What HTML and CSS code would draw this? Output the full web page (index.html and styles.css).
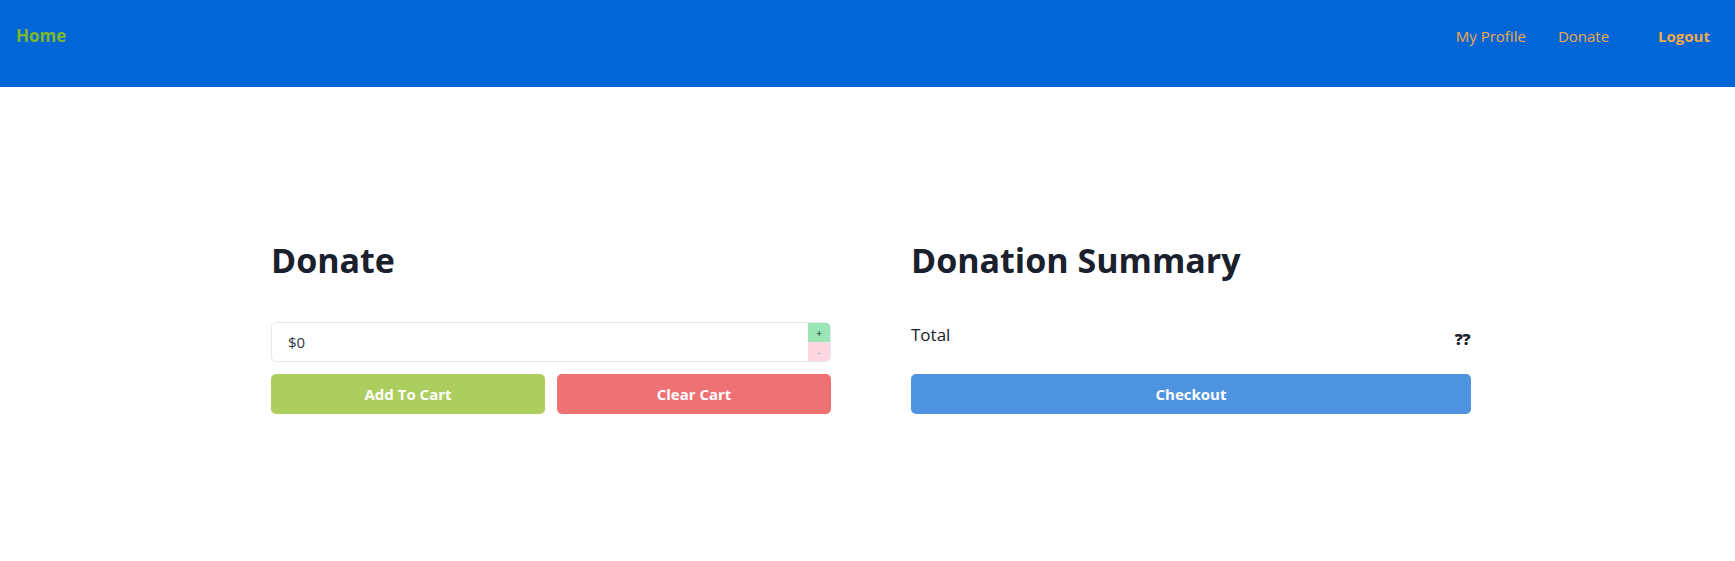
FILE: index.html
```html
<!DOCTYPE html>
<html lang="en">
<head>
<meta charset="utf-8">
<title>Donate</title>
<link rel="stylesheet" href="styles.css">
</head>
<body>
<nav class="navbar">
  <a class="brand" href="#">Home</a>
  <div class="nav-links">
    <a class="nav-link" href="#">My Profile</a>
    <a class="nav-link" href="#">Donate</a>
    <a class="nav-link logout" href="#">Logout</a>
  </div>
</nav>
<main class="columns">
  <section class="col">
    <h1 class="title">Donate</h1>
    <div class="amount">
      <span class="amount-value">$0</span>
      <div class="spinner">
        <span class="spin up">+</span>
        <span class="spin down">-</span>
      </div>
    </div>
    <div class="btn-row">
      <button class="btn btn-add">Add To Cart</button>
      <button class="btn btn-clear">Clear Cart</button>
    </div>
  </section>
  <section class="col">
    <h1 class="title">Donation Summary</h1>
    <div class="total-row">
      <span class="total-label">Total</span>
      <span class="total-value">??</span>
    </div>
    <button class="btn btn-checkout">Checkout</button>
  </section>
</main>
</body>
</html>
```
FILE: styles.css
```css
* { box-sizing: border-box; }
html, body { margin: 0; padding: 0; }
body {
  font-family: "Open Sans", "Noto Sans", sans-serif;
  color: #1a202c;
  background: #ffffff;
}
.navbar {
  height: 87px;
  background: #0366d6;
  display: flex;
  align-items: flex-start;
  justify-content: space-between;
  padding: 24px 25px 0 16px;
}
.brand {
  color: #7cb82e;
  font-weight: 700;
  font-size: 17px;
  line-height: 24px;
  text-decoration: none;
}
.nav-links {
  display: flex;
  align-items: center;
}
.nav-link {
  color: #f0aa4a;
  font-size: 15px;
  line-height: 24px;
  text-decoration: none;
  margin-left: 32px;
}
.nav-link.logout {
  font-weight: 700;
  margin-left: 49px;
}
.columns {
  display: grid;
  grid-template-columns: 560px 560px;
  column-gap: 80px;
  margin: 153px 0 0 271px;
}
.title {
  margin: 0 0 42px 0;
  font-size: 34px;
  line-height: 40px;
  font-weight: 700;
  color: #1a202c;
}
.amount {
  height: 40px;
  border: 1px solid #e2e8f0;
  border-radius: 5px;
  display: flex;
  align-items: stretch;
  overflow: hidden;
}
.amount-value {
  flex: 1;
  display: flex;
  align-items: center;
  padding-left: 16px;
  font-size: 15px;
  color: #2d3748;
}
.spinner {
  width: 22px;
  display: flex;
  flex-direction: column;
}
.spin {
  flex: 1;
  display: flex;
  align-items: center;
  justify-content: center;
  font-size: 10px;
  line-height: 1;
}
.spin.up { background: #9ae6b4; color: #1a202c; }
.spin.down { background: #fed7e2; color: #a0aec0; }
.btn-row {
  display: grid;
  grid-template-columns: 1fr 1fr;
  column-gap: 12px;
  margin-top: 12px;
}
.btn {
  height: 40px;
  border: none;
  border-radius: 5px;
  color: #ffffff;
  font-family: "Open Sans", "Noto Sans", sans-serif;
  font-weight: 700;
  font-size: 15px;
  cursor: pointer;
  width: 100%;
}
.btn-add { background: #adcd5f; }
.btn-clear { background: #ee7174; }
.btn-checkout { background: #4e93e0; margin-top: 12px; }
.total-row {
  height: 40px;
  display: flex;
  justify-content: space-between;
  align-items: flex-start;
}
.total-label {
  font-size: 17px;
  line-height: 28px;
  margin-top: -1px;
}
.total-value {
  font-size: 16px;
  font-weight: 800;
  line-height: 24px;
  margin-top: 5px;
  margin-right: 1px;
  letter-spacing: -0.5px;
}
```
